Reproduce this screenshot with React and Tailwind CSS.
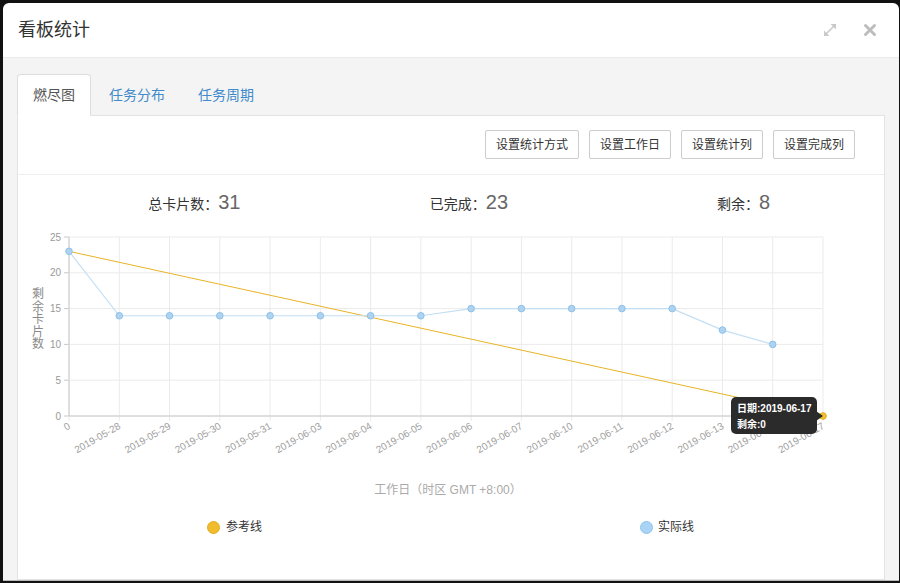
import React from 'react'

const FONT = { fontFamily: '"Liberation Sans", "Noto Sans CJK SC", sans-serif' }

const labels = [
  '0', '2019-05-28', '2019-05-29', '2019-05-30', '2019-05-31', '2019-06-03', '2019-06-04', '2019-06-05',
  '2019-06-06', '2019-06-07', '2019-06-10', '2019-06-11', '2019-06-12', '2019-06-13', '2019-06-14', '2019-06-17',
]
const actual = [23, 14, 14, 14, 14, 14, 14, 14, 15, 15, 15, 15, 15, 12, 10]

const X0 = 68
const X1 = 822
const Y0 = 415
const Y25 = 236
const px = (i) => X0 + (i * (X1 - X0)) / (labels.length - 1)
const py = (v) => Y0 - (v * (Y0 - Y25)) / 25

function ExpandIcon() {
  return (
    <svg width="18" height="18" viewBox="0 0 18 18" fill="none">
      <path d="M4 14 L14 4" stroke="#c9c9c9" strokeWidth="1.6" />
      <path d="M9.5 3 H15 V8.5 Z" fill="#c9c9c9" />
      <path d="M3 9.5 V15 H8.5 Z" fill="#c9c9c9" />
    </svg>
  )
}

function CloseIcon() {
  return (
    <svg width="14" height="14" viewBox="0 0 14 14" fill="none">
      <path d="M2.5 2.5 L11.5 11.5 M11.5 2.5 L2.5 11.5" stroke="#bdbdbd" strokeWidth="3" strokeLinecap="round" />
    </svg>
  )
}

function BurnChart() {
  const ticks = [0, 5, 10, 15, 20, 25]
  const actualPts = actual.map((v, i) => `${px(i)},${py(v)}`).join(' ')
  return (
    <svg width="868" height="280" viewBox="17 225 868 280" style={FONT} className="block">
      {ticks.map((t) => (
        <g key={t}>
          <line x1={X0} x2={X1} y1={py(t)} y2={py(t)} stroke="#ebebeb" strokeWidth="1" />
          <line x1={X0 - 5} x2={X0} y1={py(t)} y2={py(t)} stroke="#c8c8c8" strokeWidth="1" />
          <text x={X0 - 8} y={py(t) + 3.5} fontSize="10" fill="#999" textAnchor="end">{t}</text>
        </g>
      ))}
      {labels.map((l, i) => (
        <g key={l}>
          <line x1={px(i)} x2={px(i)} y1={Y25} y2={Y0 + 5} stroke="#ebebeb" strokeWidth="1" />
          <text
            x={px(i) + 2}
            y={Y0 + 12}
            fontSize="10"
            fill="#a0a0a0"
            textAnchor="end"
            transform={`rotate(-30 ${px(i) + 2} ${Y0 + 12})`}
          >
            {l}
          </text>
        </g>
      ))}
      <line x1={X0} x2={X0} y1={Y25} y2={Y0} stroke="#c8c8c8" strokeWidth="1" />
      <line x1={X0} x2={X1} y1={Y0} y2={Y0} stroke="#c8c8c8" strokeWidth="1" />

      <text x="37" y="297" fontSize="12" fill="#8a8a8a" textAnchor="middle">
        {'剩余卡片数'.split('').map((c, i) => (
          <tspan key={i} x="37" dy={i === 0 ? 0 : 12.5}>{c}</tspan>
        ))}
      </text>

      <line x1={X0} y1={py(23)} x2={X1} y2={py(0)} stroke="#e8b425" strokeWidth="1" />
      <polyline points={actualPts} fill="none" stroke="#c3dff3" strokeWidth="1.2" />
      {actual.map((v, i) => (
        <circle key={i} cx={px(i)} cy={py(v)} r="3.3" fill="#aed3f1" stroke="#8fc0e8" strokeWidth="1" />
      ))}
      <circle cx={X1} cy={py(0)} r="3.3" fill="#f2c131" stroke="#e2ab1a" strokeWidth="1" />

      <rect x="730" y="396" width="86" height="37" rx="5" fill="#2b2b2b" />
      <path d="M815 410 L822 415 L815 420 Z" fill="#2b2b2b" />
      <text x="736" y="411" fontSize="10" fontWeight="bold" fill="#fff">日期:2019-06-17</text>
      <text x="736" y="427" fontSize="10" fontWeight="bold" fill="#fff">剩余:0</text>

      <text x="447" y="493" fontSize="12" fill="#aaa" textAnchor="middle">工作日（时区 GMT +8:00）</text>
    </svg>
  )
}

function Stat({ label, value }) {
  return (
    <div className="flex items-baseline justify-center">
      <span className="text-[14px] text-[#333]">{label}</span>
      <span className="text-[20px] text-[#666]">{value}</span>
    </div>
  )
}

export default function App() {
  const buttons = ['设置统计方式', '设置工作日', '设置统计列', '设置完成列']
  return (
    <div className="w-[900px] h-[583px] overflow-hidden bg-[#111] pl-[3px] pt-[3px]" style={FONT}>
      <div className="w-[896px] h-[578px] rounded-t-[6px] bg-white overflow-hidden flex flex-col border-b border-[#bbb]">
        <div className="h-[55px] shrink-0 flex items-center justify-between pl-[15px] pr-[22px] border-b border-[#eaeaea]">
          <h1 className="text-[18px] text-[#333]">看板统计</h1>
          <div className="flex items-center gap-[24px]">
            <ExpandIcon />
            <CloseIcon />
          </div>
        </div>

        <div className="flex-1 bg-[#f4f4f4] px-[14px] pt-[16px] flex flex-col">
          <div className="flex h-[42px] -mb-px relative z-10 gap-[3px]">
            <div className="px-[15px] flex items-center bg-white border border-[#ddd] border-b-white rounded-t-[4px] text-[14px] text-[#555]">
              燃尽图
            </div>
            <div className="px-[15px] flex items-center text-[14px] text-[#428bca]">任务分布</div>
            <div className="px-[15px] flex items-center text-[14px] text-[#428bca]">任务周期</div>
          </div>

          <div className="flex-1 bg-white border border-[#e3e3e3] flex flex-col">
            <div className="flex justify-end gap-[10px] pt-[14px] pb-[15px] pr-[29px] border-b border-[#eeeeee]">
              {buttons.map((b) => (
                <button
                  key={b}
                  type="button"
                  className="h-[29px] px-[10px] border border-[#ccc] rounded-[2px] bg-white text-[12px] text-[#333]"
                >
                  {b}
                </button>
              ))}
            </div>

            <div className="grid grid-cols-3 h-[51px] pt-[3px] items-center pl-[39px] pr-[3px]">
              <Stat label="总卡片数：" value="31" />
              <Stat label="已完成：" value="23" />
              <Stat label="剩余：" value="8" />
            </div>

            <BurnChart />

            <div className="flex items-center h-[20px] mt-[11px] text-[12px] text-[#333]">
              <div className="flex items-center gap-[6px] ml-[189px]">
                <span className="w-[13px] h-[13px] rounded-full bg-[#f0bc2e] border border-[#e3ad1c]" />
                <span>参考线</span>
              </div>
              <div className="flex items-center gap-[5px] ml-[378px]">
                <span className="w-[13px] h-[13px] rounded-full bg-[#a9d4f5] border border-[#8dc4ef]" />
                <span>实际线</span>
              </div>
            </div>
          </div>
        </div>
      </div>
    </div>
  )
}
